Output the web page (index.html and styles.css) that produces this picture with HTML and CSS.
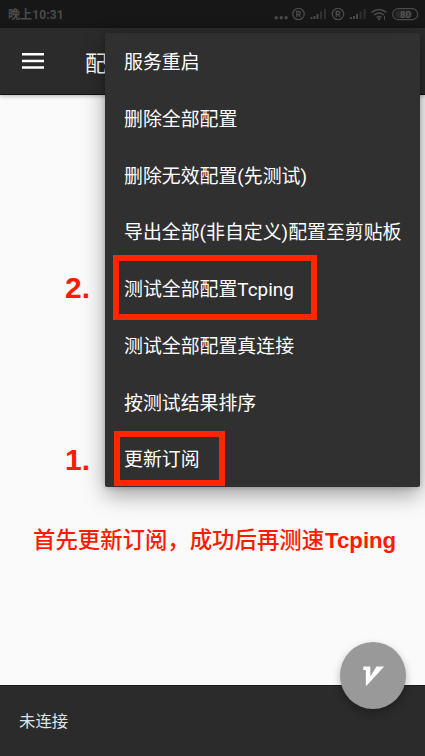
FILE: index.html
```html
<!DOCTYPE html>
<html lang="zh-CN">
<head>
<meta charset="utf-8">
<title>配置</title>
<link rel="stylesheet" href="styles.css">
</head>
<body>
<div class="screen">
  <header class="status">
    <span class="clock">晚上10:31</span>
    <svg class="indicators" width="146" height="18" viewBox="0 0 146 18" fill="none" stroke="#4b4b4b">
      <g fill="#4b4b4b" stroke="none"><circle cx="2.2" cy="12.8" r="1.7"/><circle cx="7.2" cy="12.8" r="1.7"/><circle cx="12.1" cy="12.8" r="1.7"/></g>
      <circle cx="24.5" cy="9" r="5.7" stroke-width="1.3"/>
      <path d="M22.8 12V6.5h2q1.6 0 1.6 1.5t-1.6 1.5h-2M24.8 9.5l1.7 2.5" stroke-width="1.3"/>
      <path d="M37.5 14v-2M40.5 14v-3M43.5 14v-5" stroke-width="2"/>
      <path d="M47 14V6.5M51 14V4" stroke="#303030" stroke-width="2"/>
      <circle cx="64" cy="9" r="5.7" stroke-width="1.3"/>
      <path d="M62.3 12V6.5h2q1.6 0 1.6 1.5t-1.6 1.5h-2M64.3 9.5l1.7 2.5" stroke-width="1.3"/>
      <path d="M77 14v-2M80 14v-3M83 14v-5" stroke-width="2"/>
      <path d="M86.5 14V6.5M90.5 14V4" stroke="#303030" stroke-width="2"/>
      <path d="M97.5 7.5q7.5-6 15 0M100 10q5-4 10 0M102.5 12.5q2.5-2 5 0" stroke-width="1.6"/>
      <circle cx="105" cy="14" r="1.3" fill="#4b4b4b" stroke="none"/>
      <path d="M110.5 11v4" stroke-width="1"/>
      <rect x="118.7" y="3.7" width="25" height="11" rx="5.5" stroke-width="1.2"/>
      <rect x="121" y="5.5" width="17" height="7.5" rx="3.5" fill="#292929" stroke="none"/>
      <text x="131.4" y="12.8" class="battery" text-anchor="middle">80</text>
    </svg>
  </header>
  <div class="appbar">
    <svg width="22" height="18" viewBox="0 0 22 18" fill="#fff"><path d="M0 1h22v2.5H0zM0 7.7h22v2.5H0zM0 14.3h22v2.5H0z"/></svg>
    <h1 class="title">配</h1>
  </div>
  <main class="content"></main>
  <footer class="connection">未连接</footer>

  <ul class="menu">
    <li>服务重启</li>
    <li>删除全部配置</li>
    <li>删除无效配置(先测试)</li>
    <li>导出全部(非自定义)配置至剪贴板</li>
    <li>测试全部配置Tcping</li>
    <li>测试全部配置真连接</li>
    <li>按测试结果排序</li>
    <li>更新订阅</li>
  </ul>

  <div class="fab">
    <svg width="22" height="20" viewBox="0 0 22 20" fill="#fff"><path d="M.3.5H7.3V10.5L13.5.5H21.2L3.5 19.7 2.8 19.2V4H.3z"/></svg>
  </div>

  <div class="frame frame-test"></div>
  <div class="frame frame-update"></div>
  <span class="step step-two">2.</span>
  <span class="step step-one">1.</span>
  <p class="caption">首先更新订阅，成功后再测速<span class="latin">Tcping</span></p>
</div>
</body>
</html>
```
FILE: styles.css
```css
* { box-sizing: border-box; }
body { margin: 0; font-family: Roboto, "Noto Sans CJK SC", sans-serif; }
.screen {
  position: relative;
  display: flex;
  flex-direction: column;
  width: 425px;
  height: 756px;
  overflow: hidden;
  background: #fafafa;
}
.status {
  display: flex;
  align-items: center;
  justify-content: space-between;
  height: 28px;
  padding: 0 5px 0 8px;
  background: #171717;
  color: #4b4b4b;
  font-size: 12px;
  font-weight: 500;
}
.clock { padding-bottom: 1px; font-weight: 700; letter-spacing: .1px; }
.battery { font: 700 9.5px Roboto, sans-serif; fill: #555; stroke: none; }
.appbar {
  display: flex;
  align-items: center;
  gap: 41px;
  height: 67px;
  padding: 0 22px;
  background: #2b2b2b;
  border-bottom: 1px solid #141414;
  box-shadow: 0 1px 4px rgba(0, 0, 0, .3);
}
.title { margin: 0; color: #fff; font-size: 22px; font-weight: 400; }
.content { flex: 1; }
.connection {
  display: flex;
  align-items: center;
  height: 71px;
  padding: 0 19px 2px;
  background: #2b2b2b;
  border-top: 1px solid #171c18;
  color: #dce4e8;
  font-size: 16.4px;
}
.menu {
  position: absolute;
  top: 33px;
  left: 105px;
  width: 315px;
  height: 454px;
  margin: 0;
  padding: 0 0 0 19px;
  display: grid;
  grid-template-rows: repeat(8, 56.75px);
  align-items: center;
  list-style: none;
  background: #303030;
  border-radius: 2px;
  box-shadow: 0 8px 22px rgba(0, 0, 0, .36), 0 1px 5px rgba(0, 0, 0, .18);
  color: #fff;
  font-size: 18.9px;
  white-space: nowrap;
}
.menu li { padding-bottom: 1.5px; }
.fab {
  position: absolute;
  top: 642px;
  left: 340px;
  display: flex;
  align-items: center;
  justify-content: center;
  width: 66px;
  height: 67px;
  padding-left: 1px;
  border-radius: 50%;
  background: #999;
  box-shadow: 0 4px 8px rgba(0, 0, 0, .28);
}
.frame { position: absolute; border: 6px solid #ff2600; }
.frame-test { top: 255px; left: 113px; width: 204px; height: 65px; }
.frame-update { top: 431px; left: 114px; width: 111px; height: 55px; }
.step {
  position: absolute;
  color: #ff1a00;
  font: 700 30px/30px "Liberation Sans", sans-serif;
}
.step-two { top: 273px; left: 65px; }
.step-one { top: 445px; left: 65px; }
.caption {
  position: absolute;
  top: 522px;
  left: 33px;
  margin: 0;
  color: #ff1a00;
  font: 500 22.4px/32px "Noto Sans CJK SC", sans-serif;
  white-space: nowrap;
}
.latin { margin-left: 1px; font-family: "Liberation Sans", sans-serif; font-size: 22.2px; font-weight: 700; }
```
